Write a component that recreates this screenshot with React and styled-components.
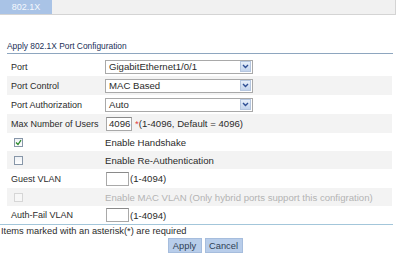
import React from "react";
import styled, { createGlobalStyle } from "styled-components";

const Global = createGlobalStyle`
  html, body { margin: 0; padding: 0; background: #ffffff; }
  body { font-family: "Liberation Sans", Arial, sans-serif; font-size: 9.3px; color: #2b2b2b; }
`;

const Page = styled.div`
  width: 400px;
  height: 253px;
  overflow: hidden;
  display: flex;
  flex-direction: column;
`;

const TabBar = styled.div`
  width: 396px;
  height: 17px;
  box-sizing: border-box;
  background: #f1f1f1;
  border-bottom: 1px solid #d4d4d4;
  border-right: 1px solid #d4d4d4;
  display: flex;
`;

const Tab = styled.div`
  width: 52px;
  background: #a9c3e6;
  color: #f4f8fd;
  display: flex;
  align-items: center;
  justify-content: center;
  font-size: 9px;
`;

const Section = styled.div`
  margin: 25px 0 0 7px;
  width: 386px;
  display: flex;
  flex-direction: column;
`;

const Title = styled.div`
  height: 13px;
  line-height: 13px;
  color: #1b2f57;
  font-size: 8.4px;
  border-bottom: 1px solid #8ea6bf;
`;

const Rows = styled.div`
  margin-top: 3px;
  display: flex;
  flex-direction: column;
  width: 385px;
`;

const Row = styled.div`
  display: grid;
  grid-template-columns: 98px 1fr;
  align-items: center;
  height: ${(p) => p.$h || 19}px;
  background: ${(p) => (p.$shade ? "#f3f3f3" : "transparent")};
`;

const Label = styled.div`
  padding-left: 4px;
  font-size: 9px;
  color: #2b2b2b;
  display: flex;
  align-items: center;
`;

const Value = styled.div`
  display: flex;
  align-items: center;
  font-size: 9.6px;
  white-space: nowrap;
  color: ${(p) => (p.$disabled ? "#b3b3b3" : "#2b2b2b")};
`;

const SelectBox = styled.div`
  width: 148px;
  height: 14px;
  box-sizing: border-box;
  border: 1px solid #a9a9a9;
  background: #fff;
  display: flex;
  align-items: center;
  justify-content: space-between;
  padding-left: 3px;
  padding-right: 1px;
`;

const Arrow = styled.div`
  width: 11px;
  height: 11px;
  box-sizing: border-box;
  background: linear-gradient(#e6eef9, #c3d4ed);
  border: 1px solid #b5c6df;
  display: flex;
  align-items: center;
  justify-content: center;
`;

const TextInput = styled.div`
  width: ${(p) => p.$w}px;
  height: 14px;
  box-sizing: border-box;
  border: 1px solid #a9a9a9;
  border-top-color: #8a8a8a;
  background: #fff;
  padding-left: 2px;
  display: flex;
  align-items: center;
  margin-left: 1px;
`;

const Star = styled.span`
  color: #e23b3b;
  margin: 0 0 0 3px;
  align-self: flex-start;
  line-height: 10px;
  margin-top: 2px;
`;

const Hint = styled.span`
  margin-left: 1px;
`;

const Check = styled.div`
  width: 9px;
  height: 9px;
  box-sizing: border-box;
  margin-left: 3px;
  border: 1px solid ${(p) => (p.$disabled ? "#d6d6d6" : "#8796a8")};
  background: ${(p) => (p.$disabled ? "#f7f7f7" : "linear-gradient(#eef1f5, #ffffff)")};
  display: flex;
  align-items: center;
  justify-content: center;
`;

const FooterLine = styled.div`
  width: 393px;
  border-top: 1px solid #a3c6da;
`;

const Note = styled.div`
  padding-left: 1px;
  height: 12px;
  line-height: 12px;
`;

const Buttons = styled.div`
  display: flex;
  justify-content: center;
  gap: 3px;
  padding-left: 10px;
  margin-top: 1px;
`;

const Button = styled.div`
  width: ${(p) => p.$w}px;
  height: 15px;
  box-sizing: border-box;
  background: #b8cdea;
  border: 1px solid #a6bddd;
  color: #2f3f55;
  display: flex;
  align-items: center;
  justify-content: center;
`;

const Chevron = () => (
  <svg width="7" height="5" viewBox="0 0 7 5">
    <path d="M1 1 L3.5 3.5 L6 1" fill="none" stroke="#2f4f94" strokeWidth="1.4" />
  </svg>
);

const Tick = () => (
  <svg width="7" height="7" viewBox="0 0 7 7">
    <path d="M1 3.5 L3 5.5 L6 1.2" fill="none" stroke="#2c8a2c" strokeWidth="1.3" />
  </svg>
);

const Select = ({ value }) => (
  <SelectBox>
    <span>{value}</span>
    <Arrow>
      <Chevron />
    </Arrow>
  </SelectBox>
);

export default function App() {
  return (
    <>
      <Global />
      <Page>
        <TabBar>
          <Tab>802.1X</Tab>
        </TabBar>
        <Section>
          <Title>Apply 802.1X Port Configuration</Title>
          <Rows>
            <Row>
              <Label>Port</Label>
              <Value><Select value="GigabitEthernet1/0/1" /></Value>
            </Row>
            <Row $shade>
              <Label>Port Control</Label>
              <Value><Select value="MAC Based" /></Value>
            </Row>
            <Row>
              <Label>Port Authorization</Label>
              <Value><Select value="Auto" /></Value>
            </Row>
            <Row $shade>
              <Label>Max Number of Users</Label>
              <Value>
                <TextInput $w={26}>4096</TextInput>
                <Star>*</Star>
                <span>(1-4096, Default = 4096)</span>
              </Value>
            </Row>
            <Row $h={18}>
              <Label><Check><Tick /></Check></Label>
              <Value>Enable Handshake</Value>
            </Row>
            <Row $h={18} $shade>
              <Label><Check /></Label>
              <Value>Enable Re-Authentication</Value>
            </Row>
            <Row>
              <Label>Guest VLAN</Label>
              <Value>
                <TextInput $w={23} />
                <Hint>(1-4094)</Hint>
              </Value>
            </Row>
            <Row $h={18} $shade>
              <Label><Check $disabled /></Label>
              <Value $disabled>Enable MAC VLAN (Only hybrid ports support this configration)</Value>
            </Row>
            <Row $h={18}>
              <Label>Auth-Fail VLAN</Label>
              <Value>
                <TextInput $w={23} />
                <Hint>(1-4094)</Hint>
              </Value>
            </Row>
          </Rows>
        </Section>
        <FooterLine />
        <Note>Items marked with an asterisk(*) are required</Note>
        <Buttons>
          <Button $w={34}>Apply</Button>
          <Button $w={38}>Cancel</Button>
        </Buttons>
      </Page>
    </>
  );
}
